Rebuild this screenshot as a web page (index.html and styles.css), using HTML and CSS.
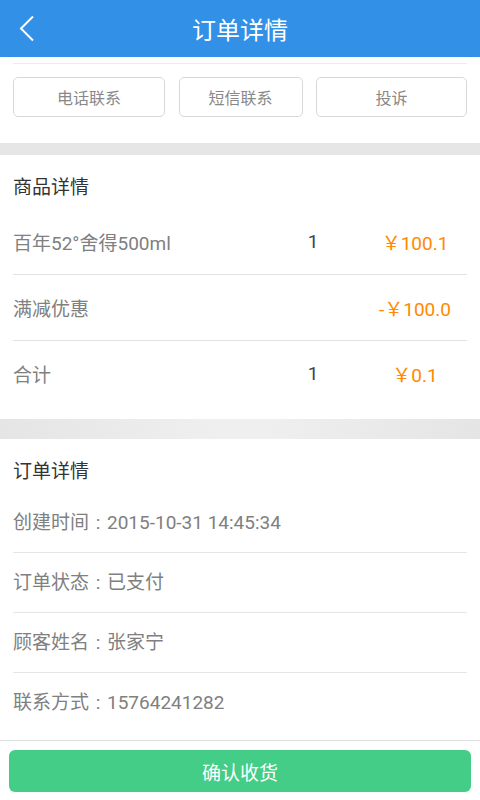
FILE: index.html
```html
<!DOCTYPE html>
<html lang="zh">
<head>
  <meta charset="UTF-8">
  <meta name="viewport" content="width=device-width, initial-scale=1">
  <title>订单详情</title>
  <link rel="stylesheet" href="styles.css">
</head>
<body>
<div class="page">
  <div class="topbar">
    <a class="back" href="#">
      <svg width="16" height="28" viewBox="0 0 16 28"><polyline points="14,1.5 2,13.5 14,25.5" fill="none" stroke="#fff" stroke-width="2"/></svg>
    </a>
    <h1>订单详情</h1>
    <span></span>
  </div>

  <div class="main">
    <div class="contact">
      <div class="contact-btns">
        <button class="btn-w1">电话联系</button>
        <button class="btn-w2">短信联系</button>
        <button class="btn-w3">投诉</button>
      </div>
    </div>

    <div class="gap gap-sm"></div>

    <div class="block">
      <div class="block-title">商品详情</div>
      <div class="line-row">
        <span class="name">百年52°舍得500ml</span>
        <span class="qty">1</span>
        <span class="price">￥100.1</span>
      </div>
      <div class="line-row">
        <span class="name">满减优惠</span>
        <span class="qty"></span>
        <span class="price">-￥100.0</span>
      </div>
      <div class="line-row">
        <span class="name">合计</span>
        <span class="qty">1</span>
        <span class="price">￥0.1</span>
      </div>
    </div>

    <div class="gap"></div>

    <div class="block">
      <div class="block-title">订单详情</div>
      <div class="info-row">创建时间<span class="colon">:</span>2015-10-31 14:45:34</div>
      <div class="info-row">订单状态<span class="colon">:</span>已支付</div>
      <div class="info-row">顾客姓名<span class="colon">:</span>张家宁</div>
      <div class="info-row">联系方式<span class="colon">:</span>15764241282</div>
    </div>

    <div class="gap"></div>
  </div>

  <div class="footer">
    <button class="confirm">确认收货</button>
  </div>
</div>
</body>
</html>
```

FILE: styles.css
```css
html, body { margin: 0; padding: 0; }
body { font-family: Roboto, "Noto Sans CJK SC", sans-serif; background: #fff; }
.page { height: 100vh; display: flex; flex-direction: column; overflow: hidden; }

.topbar { height: 57px; background: #3290e6; display: grid; grid-template-columns: 57px 1fr 57px; align-items: center; flex-shrink: 0; }
.topbar h1 { margin: 0; text-align: center; color: #fff; font-size: 24px; font-weight: normal; }
.back { display: flex; align-items: center; padding-left: 19px; height: 57px; }

.main { flex: 1; overflow: hidden; }

.contact { padding: 6px 13px 26px; }
.contact-btns { border-top: 1px solid #ebebeb; padding-top: 13px; display: flex; justify-content: space-between; }
.contact-btns button { height: 40px; background: #fff; border: 1px solid #d8d8d8; border-radius: 5px; color: #888; font-size: 16px; font-family: inherit; }
.btn-w1 { width: 152px; }
.btn-w2 { width: 124px; }
.btn-w3 { width: 151px; }

.gap { height: 20px; background: linear-gradient(to right, #e5e5e5, #efefef 45%, #efefef 55%, #e5e5e5); }
.gap-sm { height: 12px; background: #e6e6e6; }

.block { padding: 0 13px 13px; }
.block-title { padding: 22px 0 10px; line-height: 22px; font-size: 19px; color: #333; }

.line-row { height: 65px; display: grid; grid-template-columns: 1fr 60px 104px; column-gap: 20px; align-items: center; font-size: 19px; border-bottom: 1px solid #e2e2e2; }
.line-row:last-child { border-bottom: none; }
.line-row .name { color: #808080; }
.line-row .qty { color: #444; text-align: center; }
.line-row .price { color: #ff8a00; text-align: center; }

.info-row { height: 59px; line-height: 59px; font-size: 19px; color: #808080; border-bottom: 1px solid #e6e6e6; }
.info-row:last-child { border-bottom: none; height: 56px; }
.colon { display: inline-block; width: 18px; text-align: center; }

.footer { height: 60px; flex-shrink: 0; border-top: 1px solid #e0e0e0; box-sizing: border-box; padding: 9px 9px 8px; background: #fff; }
.confirm { width: 100%; height: 42px; border: none; border-radius: 6px; background: #43cd87; color: #fff; font-size: 19px; font-family: inherit; }
```
